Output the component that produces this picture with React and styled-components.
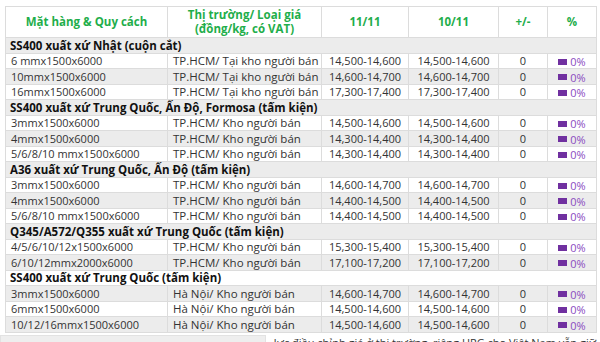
import React from "react";
import styled, { createGlobalStyle } from "styled-components";

const GlobalStyle = createGlobalStyle`
  html, body {
    margin: 0;
    padding: 0;
    background: #fff;
    overflow: hidden;
  }
  body {
    font-family: "Open Sans", "Noto Sans", sans-serif;
  }
`;

const sections = [
  {
    title: "SS400 xuất xứ Nhật (cuộn cắt)",
    rows: [
      ["6 mmx1500x6000", "TP.HCM/ Tại kho người bán", "14,500-14,600", "14,500-14,600"],
      ["10mmx1500x6000", "TP.HCM/ Tại kho người bán", "14,600-14,700", "14,600-14,700"],
      ["16mmx1500x6000", "TP.HCM/ Tại kho người bán", "17,300-17,400", "17,300-17,400"],
    ],
  },
  {
    title: "SS400 xuất xứ Trung Quốc, Ấn Độ, Formosa (tấm kiện)",
    rows: [
      ["3mmx1500x6000", "TP.HCM/ Kho người bán", "14,500-14,600", "14,500-14,600"],
      ["4mmx1500x6000", "TP.HCM/ Kho người bán", "14,300-14,400", "14,300-14,400"],
      ["5/6/8/10 mmx1500x6000", "TP.HCM/ Kho người bán", "14,300-14,400", "14,300-14,400"],
    ],
  },
  {
    title: "A36 xuất xứ Trung Quốc, Ấn Độ (tấm kiện)",
    rows: [
      ["3mmx1500x6000", "TP.HCM/ Kho người bán", "14,600-14,700", "14,600-14,700"],
      ["4mmx1500x6000", "TP.HCM/ Kho người bán", "14,400-14,500", "14,400-14,500"],
      ["5/6/8/10 mmx1500x6000", "TP.HCM/ Kho người bán", "14,400-14,500", "14,400-14,500"],
    ],
  },
  {
    title: "Q345/A572/Q355 xuất xứ Trung Quốc (tấm kiện)",
    rows: [
      ["4/5/6/10/12x1500x6000", "TP.HCM/ Kho người bán", "15,300-15,400", "15,300-15,400"],
      ["6/10/12mmx2000x6000", "TP.HCM/ Kho người bán", "17,100-17,200", "17,100-17,200"],
    ],
  },
  {
    title: "SS400 xuất xứ Trung Quốc (tấm kiện)",
    rows: [
      ["3mmx1500x6000", "Hà Nội/ Kho người bán", "14,600-14,700", "14,600-14,700"],
      ["6mmx1500x6000", "Hà Nội/ Kho người bán", "14,500-14,600", "14,500-14,600"],
      ["10/12/16mmx1500x6000", "Hà Nội/ Kho người bán", "14,500-14,600", "14,500-14,600"],
    ],
  },
];

const Page = styled.div`
  padding: 6px 4px 0 5px;
`;

const Table = styled.table`
  width: 591px;
  border-collapse: collapse;
  table-layout: fixed;
  font-size: 11px;
  color: #333;
`;

const HeadCell = styled.th`
  height: 30px;
  padding: 0 2px;
  border: 1px solid #dcdcdc;
  color: #1fae4b;
  font-size: 11.5px;
  font-weight: 700;
  line-height: 14px;
  text-align: center;
  vertical-align: middle;
`;

const Row = styled.tr`
  height: 15.5px;
  background: ${(p) => (p.$shaded ? "#ececec" : "#fff")};
`;

const SectionCell = styled.td`
  padding: 0 0 0 4px;
  border: 1px solid #dcdcdc;
  color: #111;
  font-size: 11.5px;
  font-weight: 700;
  line-height: 13px;
  white-space: nowrap;
`;

const Cell = styled.td`
  padding: ${(p) => (p.$align === "left" ? "0 0 0 5px" : "0")};
  border: 1px solid #dcdcdc;
  line-height: 13px;
  white-space: nowrap;
  overflow: hidden;
  text-align: ${(p) => p.$align || "center"};
`;

const Text = styled.span`
  font-size: ${(p) => p.$size || "11px"};
`;

const Percent = styled.span`
  display: inline-flex;
  align-items: center;
  gap: 3px;
  color: #8a4bbf;
  &::before {
    content: "";
    width: 9px;
    height: 6px;
    background: #7030a0;
  }
`;

const Footer = styled.div`
  display: flex;
  align-items: flex-start;
  gap: 8px;
  margin-top: 2px;
  margin-left: -5px;
  font-size: 11px;
  color: #333;
  white-space: nowrap;
`;

const FooterBar = styled.div`
  width: 290px;
  height: 12px;
  background: #eeeeee;
  border: 1px solid #e2e2e2;
`;

export default function App() {
  let idx = 0;
  return (
    <Page>
      <GlobalStyle />
      <Table>
        <colgroup>
          <col style={{ width: 162 }} />
          <col style={{ width: 154 }} />
          <col style={{ width: 87 }} />
          <col style={{ width: 90 }} />
          <col style={{ width: 49 }} />
          <col style={{ width: 49 }} />
        </colgroup>
        <thead>
          <tr>
            <HeadCell>Mặt hàng &amp; Quy cách</HeadCell>
            <HeadCell>
              Thị trường/ Loại giá
              <br />
              (đồng/kg, có VAT)
            </HeadCell>
            <HeadCell>11/11</HeadCell>
            <HeadCell>10/11</HeadCell>
            <HeadCell>+/-</HeadCell>
            <HeadCell>%</HeadCell>
          </tr>
        </thead>
        <tbody>
          {sections.map((s) => {
            const out = [];
            out.push(
              <Row key={s.title} $shaded={idx++ % 2 === 0}>
                <SectionCell colSpan={6}>{s.title}</SectionCell>
              </Row>
            );
            s.rows.forEach((r, i) => {
              out.push(
                <Row key={s.title + i} $shaded={idx++ % 2 === 0}>
                  <Cell $align="left">{r[0]}</Cell>
                  <Cell $align="left">
                    <Text $size="11.5px">{r[1]}</Text>
                  </Cell>
                  <Cell>{r[2]}</Cell>
                  <Cell>{r[3]}</Cell>
                  <Cell>0</Cell>
                  <Cell>
                    <Percent>0%</Percent>
                  </Cell>
                </Row>
              );
            });
            return out;
          })}
        </tbody>
      </Table>
      <Footer>
        <FooterBar />
        <span>lực điều chỉnh giá ở thị trường, riêng HPG cho Việt Nam vẫn giữ</span>
      </Footer>
    </Page>
  );
}
